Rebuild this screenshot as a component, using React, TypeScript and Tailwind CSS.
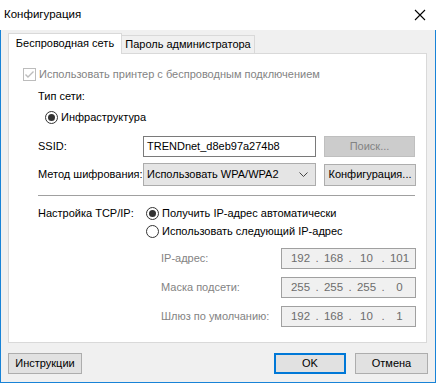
import React from 'react';

const IP_ROWS = [
  { label: 'IP-адрес:', parts: ['192', '168', '10', '101'] },
  { label: 'Маска подсети:', parts: ['255', '255', '255', '0'] },
  { label: 'Шлюз по умолчанию:', parts: ['192', '168', '10', '1'] },
];

const Radio = ({ checked }: { checked?: boolean }) => (
  <svg width="13" height="13" viewBox="0 0 13 13" className="shrink-0">
    <circle cx="6.5" cy="6.5" r="6" fill="#fff" stroke="#333" strokeWidth="1" />
    {checked && <circle cx="6.5" cy="6.5" r="3.5" fill="#333" />}
  </svg>
);

const Checkbox = () => (
  <svg width="13" height="13" viewBox="0 0 13 13" className="shrink-0">
    <rect x="0.5" y="0.5" width="12" height="12" fill="#fff" stroke="#bcbcbc" />
    <polyline points="2.5,6.5 5,9 10.5,3.5" fill="none" stroke="#bcbcbc" strokeWidth="1.4" />
  </svg>
);

const IpBox = ({ parts }: { parts: string[] }) => (
  <div className="flex h-[21px] w-[135px] items-center border border-[#a0a0a0] bg-[#f0f0f0] pl-[6px] text-[11.5px] text-[#6d6d6d]">
    {parts.map((p, i) => (
      <React.Fragment key={i}>
        <span className="w-[25px] text-center">{p}</span>
        {i < 3 && <span className="w-[8px] text-center">.</span>}
      </React.Fragment>
    ))}
  </div>
);

const Button = ({
  children,
  className = '',
  disabled,
  primary,
}: {
  children: React.ReactNode;
  className?: string;
  disabled?: boolean;
  primary?: boolean;
}) => (
  <div
    className={`flex items-center justify-center whitespace-nowrap ${
      primary ? 'border-2 border-[#0078d7]' : 'border border-[#adadad]'
    } ${disabled ? 'border-[#bfbfbf] bg-[#cccccc] text-[#838383]' : 'bg-[#e1e1e1] text-black'} ${className}`}
  >
    {children}
  </div>
);

export default function App() {
  return (
    <div className="flex h-[383px] w-[436px] flex-col whitespace-nowrap font-['Liberation_Sans',sans-serif] text-[11px] leading-none text-black">
      {/* title bar */}
      <div className="flex h-[30px] shrink-0 items-center justify-between bg-white pl-[4px] pr-[10px]">
        <span className="text-[11.5px] text-black">Конфигурация</span>
        <svg width="12" height="12" viewBox="0 0 12 12">
          <path d="M1 1L11 11M11 1L1 11" stroke="#000" strokeWidth="1.1" />
        </svg>
      </div>

      <div className="flex flex-1 flex-col border-x border-b border-[#1883d7] bg-[#f0f0f0] px-[7px] pt-[3px]">
        {/* tabs */}
        <div className="flex h-[20px] items-end">
          <div className="relative z-10 -mb-px flex h-[21px] w-[114px] items-center justify-center border border-b-0 border-[#d9d9d9] bg-white pb-[1px]">
            Беспроводная сеть
          </div>
          <div className="flex h-[18px] w-[133px] items-center justify-center border border-b-0 border-l-0 border-[#d9d9d9] bg-[#f0f0f0]">
            Пароль администратора
          </div>
        </div>

        {/* panel */}
        <div className="flex h-[290px] w-[419px] flex-col border border-[#d9d9d9] bg-white pl-[14px] pt-[13px]">
          <div className="flex h-[14px] items-center gap-[3px] text-[#838383]">
            <Checkbox />
            <span>Использовать принтер с беспроводным подключением</span>
          </div>

          <div className="ml-[15px] mt-[8px] flex h-[14px] items-center">Тип сети:</div>

          <div className="ml-[22px] mt-[7px] flex h-[14px] items-center gap-[3px]">
            <Radio checked />
            <span>Инфраструктура</span>
          </div>

          <div className="ml-[15px] mt-[12px] flex h-[21px] items-center">
            <span className="w-[105px]">SSID:</span>
            <div className="flex h-[21px] w-[173px] items-center border border-[#7a7a7a] bg-white px-[3px]">
              TRENDnet_d8eb97a274b8
            </div>
            <Button disabled className="ml-[8px] h-[21px] w-[91px]">
              Поиск...
            </Button>
          </div>

          <div className="ml-[15px] mt-[6px] flex h-[23px] items-center">
            <span className="w-[105px]">Метод шифрования:</span>
            <div className="flex h-[23px] w-[173px] items-center justify-between border border-[#acacac] bg-[#e5e5e5] pl-[3px] pr-[7px]">
              <span>Использовать WPA/WPA2</span>
              <svg width="9" height="5" viewBox="0 0 9 5">
                <polyline points="0.5,0.5 4.5,4.5 8.5,0.5" fill="none" stroke="#444" strokeWidth="1" />
              </svg>
            </div>
            <Button className="ml-[8px] h-[22px] w-[92px]">Конфигурация...</Button>
          </div>

          <div className="ml-[15px] mt-[9px] h-px w-[377px] bg-[#a0a0a0]" />

          <div className="ml-[15px] mt-[11px] flex">
            <span className="w-[108px] pt-[1px]">Настройка TCP/IP:</span>
            <div className="flex flex-col gap-[5px]">
              <div className="flex h-[13px] items-center gap-[3px]">
                <Radio checked />
                <span>Получить IP-адрес автоматически</span>
              </div>
              <div className="flex h-[13px] items-center gap-[3px]">
                <Radio />
                <span>Использовать следующий IP-адрес</span>
              </div>
            </div>
          </div>

          <div className="ml-[138px] mt-[10px] flex flex-col gap-[8px]">
            {IP_ROWS.map((row) => (
              <div key={row.label} className="flex h-[21px] items-center">
                <span className="w-[120px] text-[#838383]">{row.label}</span>
                <IpBox parts={row.parts} />
              </div>
            ))}
          </div>
        </div>

        {/* footer buttons */}
        <div className="mt-[10px] flex h-[21px] items-center">
          <Button className="h-[21px] w-[74px]">Инструкции</Button>
          <div className="flex-1" />
          <Button primary className="h-[21px] w-[72px]">
            OK
          </Button>
          <Button className="ml-[9px] h-[21px] w-[73px]">Отмена</Button>
        </div>
      </div>
    </div>
  );
}
